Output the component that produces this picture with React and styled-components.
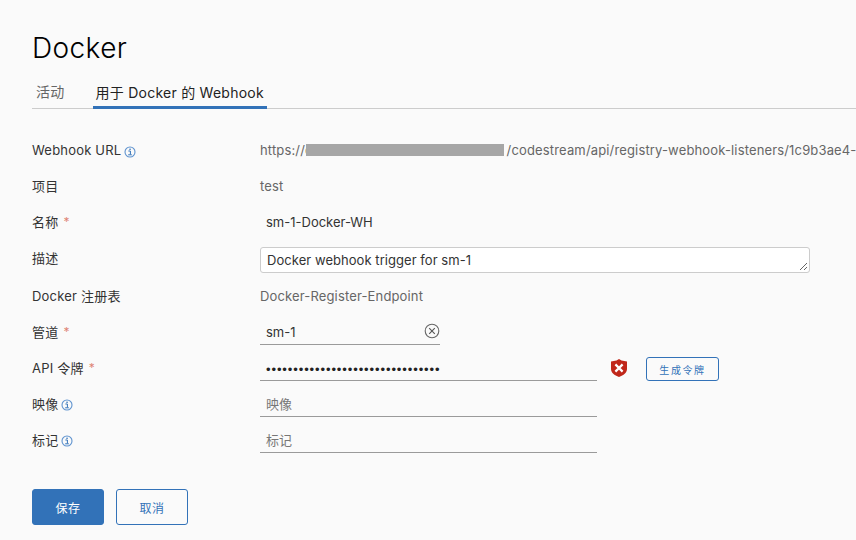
import React from "react";
import styled, { createGlobalStyle } from "styled-components";

const FONT = `Inter, "Noto Sans CJK SC", sans-serif`;

const Global = createGlobalStyle`
  html, body { margin: 0; padding: 0; background: #fafafa; }
  body { width: 856px; height: 540px; overflow: hidden; font-family: ${FONT}; }
  * { box-sizing: border-box; }
`;

const Page = styled.div`
  width: 856px;
  height: 540px;
  padding: 30px 0 0 32px;
  background: #fafafa;
  overflow: hidden;
`;

const Title = styled.h1`
  margin: 0;
  height: 36px;
  font-size: 28px;
  line-height: 36px;
  font-weight: 300;
  color: #000;
  letter-spacing: 0.4px;
`;

const Tabs = styled.div`
  display: flex;
  gap: 28px;
  height: 43px;
  padding: 0 0 0 4px;
  border-bottom: 1px solid #ccc;
  align-items: flex-end;
`;

const Tab = styled.div`
  height: 30px;
  margin-bottom: ${(p) => (p.$active ? "-1px" : "0")};
  padding: 0 ${(p) => (p.$active ? "3px" : "0")};
  font-size: 14px;
  line-height: 28px;
  letter-spacing: 0.25px;
  color: ${(p) => (p.$active ? "#222" : "#666")};
  border-bottom: ${(p) => (p.$active ? "3px solid #3272b8" : "none")};
  white-space: nowrap;
`;

const Form = styled.div`
  display: flex;
  flex-direction: column;
  margin-top: 23px;
`;

const Row = styled.div`
  display: flex;
  align-items: center;
  height: ${(p) => p.$h || 36}px;
`;

const Label = styled.div`
  display: flex;
  align-items: center;
  width: 228px;
  flex: none;
  padding-bottom: ${(p) => p.$lift ?? 2}px;
  font-size: 13px;
  letter-spacing: 0.2px;
  color: #333;
  white-space: nowrap;
`;

const Star = styled.span`
  color: #c92100;
  margin-left: 5px;
  font-size: 12px;
  opacity: 0.55;
`;

const Value = styled.div`
  font-size: 13px;
  color: #666;
  white-space: nowrap;
  letter-spacing: 0.15px;
  display: flex;
  align-items: center;
`;

const Redacted = styled.span`
  display: inline-block;
  width: 198px;
  height: 12px;
  background: #a6a6a6;
  margin: 0 3px 0 -7px;
`;

const Field = styled.div`
  position: relative;
  display: flex;
  align-items: center;
  height: 25px;
  width: ${(p) => p.$w}px;
  border-bottom: 1px solid ${(p) => (p.$plain ? "transparent" : "#9a9a9a")};
  padding-left: 6px;
  font-size: 13px;
  letter-spacing: 0;
  color: ${(p) => (p.$ph ? "#777" : "#333")};
`;

const Dots = styled.span`
  font-family: "Liberation Sans", sans-serif;
  font-size: 13px;
  color: #222;
  letter-spacing: 0.9px;
  padding-top: 3px;
`;

const TextArea = styled.div`
  position: relative;
  width: 550px;
  height: 26px;
  margin-top: 2px;
  padding: 0 6px;
  display: flex;
  align-items: center;
  background: #fff;
  border: 1px solid #ccc;
  border-radius: 3px;
  font-size: 13px;
  letter-spacing: 0.05px;
  color: #333;
`;

const Grip = styled.svg`
  position: absolute;
  right: 1px;
  bottom: 1px;
`;

const ClearIcon = styled.svg`
  position: absolute;
  right: 0;
  top: 3px;
`;

const InfoSvg = styled.svg`
  margin-left: 3px;
  margin-top: 3px;
  flex: none;
`;

const ShieldSvg = styled.svg`
  margin-left: 14px;
  flex: none;
`;

const TokenButton = styled.button`
  width: 73px;
  height: 24px;
  margin: 2px 0 0 19px;
  padding: 0;
  background: transparent;
  border: 1px solid #3272b8;
  border-radius: 3px;
  color: #3272b8;
  font-family: ${FONT};
  font-size: 10px;
  letter-spacing: 1.6px;
`;

const Actions = styled.div`
  display: flex;
  gap: 12px;
  margin-top: 31px;
`;

const Button = styled.button`
  width: 72px;
  height: 36px;
  padding: 0;
  border: 1px solid #3272b8;
  border-radius: 3px;
  background: ${(p) => (p.$primary ? "#3272b8" : "transparent")};
  color: ${(p) => (p.$primary ? "#fff" : "#3272b8")};
  font-family: ${FONT};
  font-size: 12px;
  letter-spacing: 0.5px;
`;

const Info = () => (
  <InfoSvg width="12" height="12" viewBox="0 0 12 12" fill="none">
    <circle cx="6" cy="6" r="5" stroke="#5f93cf" strokeWidth="1.1" />
    <rect x="5.4" y="2.6" width="1.3" height="1.4" fill="#3272b8" />
    <path d="M4.4 5h2v3.4M4.2 8.8h3.6" stroke="#3272b8" strokeWidth="1" />
  </InfoSvg>
);

const Clear = () => (
  <ClearIcon width="16" height="16" viewBox="0 0 16 16" fill="none">
    <circle cx="8" cy="8" r="6.8" stroke="#666" strokeWidth="1.1" />
    <path d="M5.2 5.2l5.6 5.6M10.8 5.2l-5.6 5.6" stroke="#555" strokeWidth="1.1" />
  </ClearIcon>
);

const Shield = () => (
  <ShieldSvg width="16" height="18" viewBox="0 0 16 18">
    <path d="M8 0l2.5 1.6L16 2.6V10c0 3.6-3.4 6.2-8 8-4.6-1.8-8-4.4-8-8V2.6l5.5-1z" fill="#c0271a" />
    <path d="M4.4 5.4l7.2 7.2M11.6 5.4l-7.2 7.2" stroke="#fff" strokeWidth="2.2" />
  </ShieldSvg>
);

export default function App() {
  return (
    <Page>
      <Global />
      <Title>Docker</Title>
      <Tabs>
        <Tab>活动</Tab>
        <Tab $active>用于 Docker 的 Webhook</Tab>
      </Tabs>
      <Form>
        <Row>
          <Label $lift={0}>Webhook URL<Info /></Label>
          <Value>https://c<Redacted />/codestream/api/registry-webhook-listeners/1c9b3ae4-3</Value>
        </Row>
        <Row>
          <Label>项目</Label>
          <Value>test</Value>
        </Row>
        <Row>
          <Label $lift={1}>名称<Star>*</Star></Label>
          <Field $w={337} $plain>sm-1-Docker-WH</Field>
        </Row>
        <Row $h={38}>
          <Label $lift={4}>描述</Label>
          <TextArea>
            Docker webhook trigger for sm-1
            <Grip width="9" height="9" viewBox="0 0 9 9">
              <path d="M1 8l7-7M5 8l3-3" stroke="#666" strokeWidth="1" />
            </Grip>
          </TextArea>
        </Row>
        <Row>
          <Label>Docker 注册表</Label>
          <Value>Docker-Register-Endpoint</Value>
        </Row>
        <Row>
          <Label>管道<Star>*</Star></Label>
          <Field $w={180}>sm-1<Clear /></Field>
        </Row>
        <Row>
          <Label>API 令牌<Star>*</Star></Label>
          <Field $w={337}><Dots>••••••••••••••••••••••••••••••••</Dots></Field>
          <Shield />
          <TokenButton>生成令牌</TokenButton>
        </Row>
        <Row>
          <Label>映像<Info /></Label>
          <Field $w={337} $ph>映像</Field>
        </Row>
        <Row>
          <Label>标记<Info /></Label>
          <Field $w={337} $ph>标记</Field>
        </Row>
      </Form>
      <Actions>
        <Button $primary>保存</Button>
        <Button>取消</Button>
      </Actions>
    </Page>
  );
}
